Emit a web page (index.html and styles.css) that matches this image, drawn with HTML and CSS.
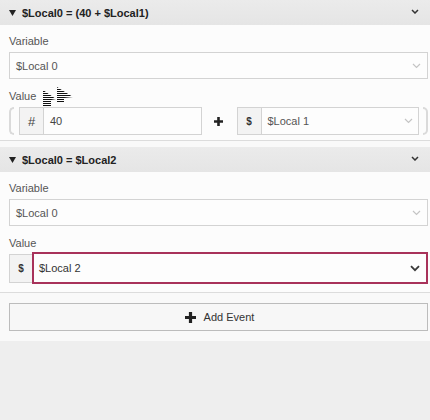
FILE: index.html
```html
<!DOCTYPE html>
<html>
<head>
<meta charset="utf-8">
<link rel="stylesheet" href="styles.css">
</head>
<body>
<div class="editor">
  <section class="panel">
    <div class="panel-header">
      <svg class="caret" width="7" height="6" viewBox="0 0 7 6"><path d="M0 0H7L3.5 6Z" fill="#222"/></svg>
      <span class="title">$Local0 = (40 + $Local1)</span>
      <svg class="chev chev-head" width="8" height="5" viewBox="0 0 8 5"><path d="M1 1L4 4L7 1" fill="none" stroke="#333" stroke-width="1.5"/></svg>
    </div>
    <div class="panel-body first">
      <div class="label">Variable</div>
      <div class="select">
        <span class="sel-text">$Local 0</span>
        <svg class="chev" width="9" height="6" viewBox="0 0 9 6"><path d="M1 1L4.5 4.5L8 1" fill="none" stroke="#c4c4c4" stroke-width="1.2"/></svg>
      </div>
      <div class="label value-label">Value
        <svg class="cursor" width="32" height="20" viewBox="0 0 32 20">
          <defs>
            <pattern id="st" width="2" height="2" patternUnits="userSpaceOnUse">
              <rect width="2" height="1" fill="#111"/>
              <rect y="1" width="2" height="1" fill="#fff"/>
            </pattern>
          </defs>
          <polygon points="1,3 14,12 9,13 9,19 1,19" fill="url(#st)"/>
          <polygon points="15,0 31,10 22,11 22,15 15,15" fill="url(#st)"/>
        </svg>
      </div>
      <div class="expr">
        <span class="paren paren-l"></span>
        <div class="group">
          <span class="addon addon-num">#</span>
          <span class="input">40</span>
        </div>
        <span class="op">
          <svg width="9" height="9" viewBox="0 0 9 9"><path d="M4.5 0V9M0 4.5H9" stroke="#222" stroke-width="2.6"/></svg>
        </span>
        <div class="group">
          <span class="addon addon-var">$</span>
          <div class="input inner-select">
            <span class="sel-text">$Local 1</span>
            <svg class="chev" width="9" height="6" viewBox="0 0 9 6"><path d="M1 1L4.5 4.5L8 1" fill="none" stroke="#c4c4c4" stroke-width="1.2"/></svg>
          </div>
        </div>
        <span class="paren paren-r"></span>
      </div>
    </div>
  </section>

  <section class="panel">
    <div class="panel-header">
      <svg class="caret" width="7" height="6" viewBox="0 0 7 6"><path d="M0 0H7L3.5 6Z" fill="#222"/></svg>
      <span class="title">$Local0 = $Local2</span>
      <svg class="chev chev-head" width="8" height="5" viewBox="0 0 8 5"><path d="M1 1L4 4L7 1" fill="none" stroke="#333" stroke-width="1.5"/></svg>
    </div>
    <div class="panel-body second">
      <div class="label">Variable</div>
      <div class="select">
        <span class="sel-text">$Local 0</span>
        <svg class="chev" width="9" height="6" viewBox="0 0 9 6"><path d="M1 1L4.5 4.5L8 1" fill="none" stroke="#c4c4c4" stroke-width="1.2"/></svg>
      </div>
      <div class="label value-label2">Value</div>
      <div class="var-row">
        <span class="addon addon-var addon-tall">$</span>
        <div class="select focused">
          <span class="sel-text dark">$Local 2</span>
          <svg class="chev" width="10" height="7" viewBox="0 0 10 7"><path d="M1 1.2L5 5.2L9 1.2" fill="none" stroke="#3a3a3a" stroke-width="1.8"/></svg>
        </div>
      </div>
    </div>
  </section>

  <div class="footer">
    <button class="add-btn">
      <svg width="11" height="11" viewBox="0 0 11 11"><path d="M5.5 0V11M0 5.5H11" stroke="#222" stroke-width="3.2"/></svg>
      <span>Add Event</span>
    </button>
  </div>
</div>
</body>
</html>
```

FILE: styles.css
```css
* { box-sizing: border-box; }

body {
  margin: 0;
  background: #eeeeee;
  font-family: "Liberation Sans", Arial, sans-serif;
  font-size: 11px;
  color: #333;
}

.editor {
  background: #f9f9f9;
}

.panel {
  background: #fcfcfc;
  margin-bottom: 6px;
}

.panel-header {
  height: 25px;
  display: flex;
  align-items: center;
  padding: 0 11px 0 9px;
  background: linear-gradient(#ebebeb, #e5e5e5);
  font-weight: bold;
  color: #222;
}

.caret {
  flex: none;
  margin-right: 6px;
  margin-top: 1px;
}

.title {
  flex: 1;
}

.chev-head {
  margin-top: -3px;
}

.panel-body {
  padding: 9px 2px 0 9px;
  border-bottom: 1px solid #dcdcdc;
}

.panel-body.first { padding-bottom: 5px; }
.panel-body.second { padding-bottom: 8px; }

.label {
  height: 14px;
  line-height: 14px;
  color: #555;
  margin-bottom: 4px;
  position: relative;
}

.value-label { margin-top: 10px; }
.value-label2 { margin-top: 10px; margin-bottom: 2px; }

.cursor {
  position: absolute;
  left: 33px;
  top: -2px;
}

.select {
  height: 27px;
  display: flex;
  align-items: center;
  border: 1px solid #d3d3d3;
  background: #fdfdfd;
  padding: 0 6px 0 6px;
  color: #555;
}

.sel-text { flex: 1; }
.sel-text.dark { color: #333; }

.chev { flex: none; }

.expr {
  display: flex;
  align-items: center;
  height: 28px;
}

.paren {
  flex: none;
  width: 5px;
  height: 28px;
  border: 2px solid #dadada;
}

.paren-l {
  border-right: none;
  border-radius: 8px 0 0 8px;
  margin-right: 5px;
}

.paren-r {
  border-left: none;
  border-radius: 0 8px 8px 0;
  margin-left: 4px;
}

.group {
  flex: 1;
  display: flex;
  height: 28px;
  border: 1px solid #d3d3d3;
  background: #fdfdfd;
}

.addon {
  flex: none;
  width: 24px;
  display: flex;
  align-items: center;
  justify-content: center;
  background: #f3f3f3;
  border-right: 1px solid #d3d3d3;
  color: #444;
  font-size: 12px;
}

.addon-num {
  font-size: 13px;
  color: #444;
}

.addon-var {
  font-weight: bold;
  font-size: 10px;
  color: #333;
}

.input {
  flex: 1;
  display: flex;
  align-items: center;
  padding-left: 6px;
  color: #444;
}

.inner-select {
  padding-right: 5px;
  color: #555;
}

.op {
  flex: none;
  width: 35px;
  display: flex;
  align-items: center;
  justify-content: center;
  padding-right: 2px;
}

.var-row {
  display: flex;
  align-items: center;
  height: 32px;
}

.addon-tall {
  width: 23px;
  height: 29px;
  border: 1px solid #d3d3d3;
  border-right: none;
}

.select.focused {
  flex: 1;
  height: 32px;
  border: 2px solid #a8325a;
  padding: 0 6px 0 5px;
  font-size: 11px;
}

.footer {
  background: #f9f9f9;
  padding: 10px 2px 10px 9px;
  margin-top: -6px;
}

.add-btn {
  width: 100%;
  height: 28px;
  display: flex;
  align-items: center;
  justify-content: center;
  gap: 8px;
  border: 1px solid #bcbcbc;
  background: #f7f7f7;
  font-family: inherit;
  font-size: 11px;
  color: #333;
  padding: 0 0 0 2px;
}
```
